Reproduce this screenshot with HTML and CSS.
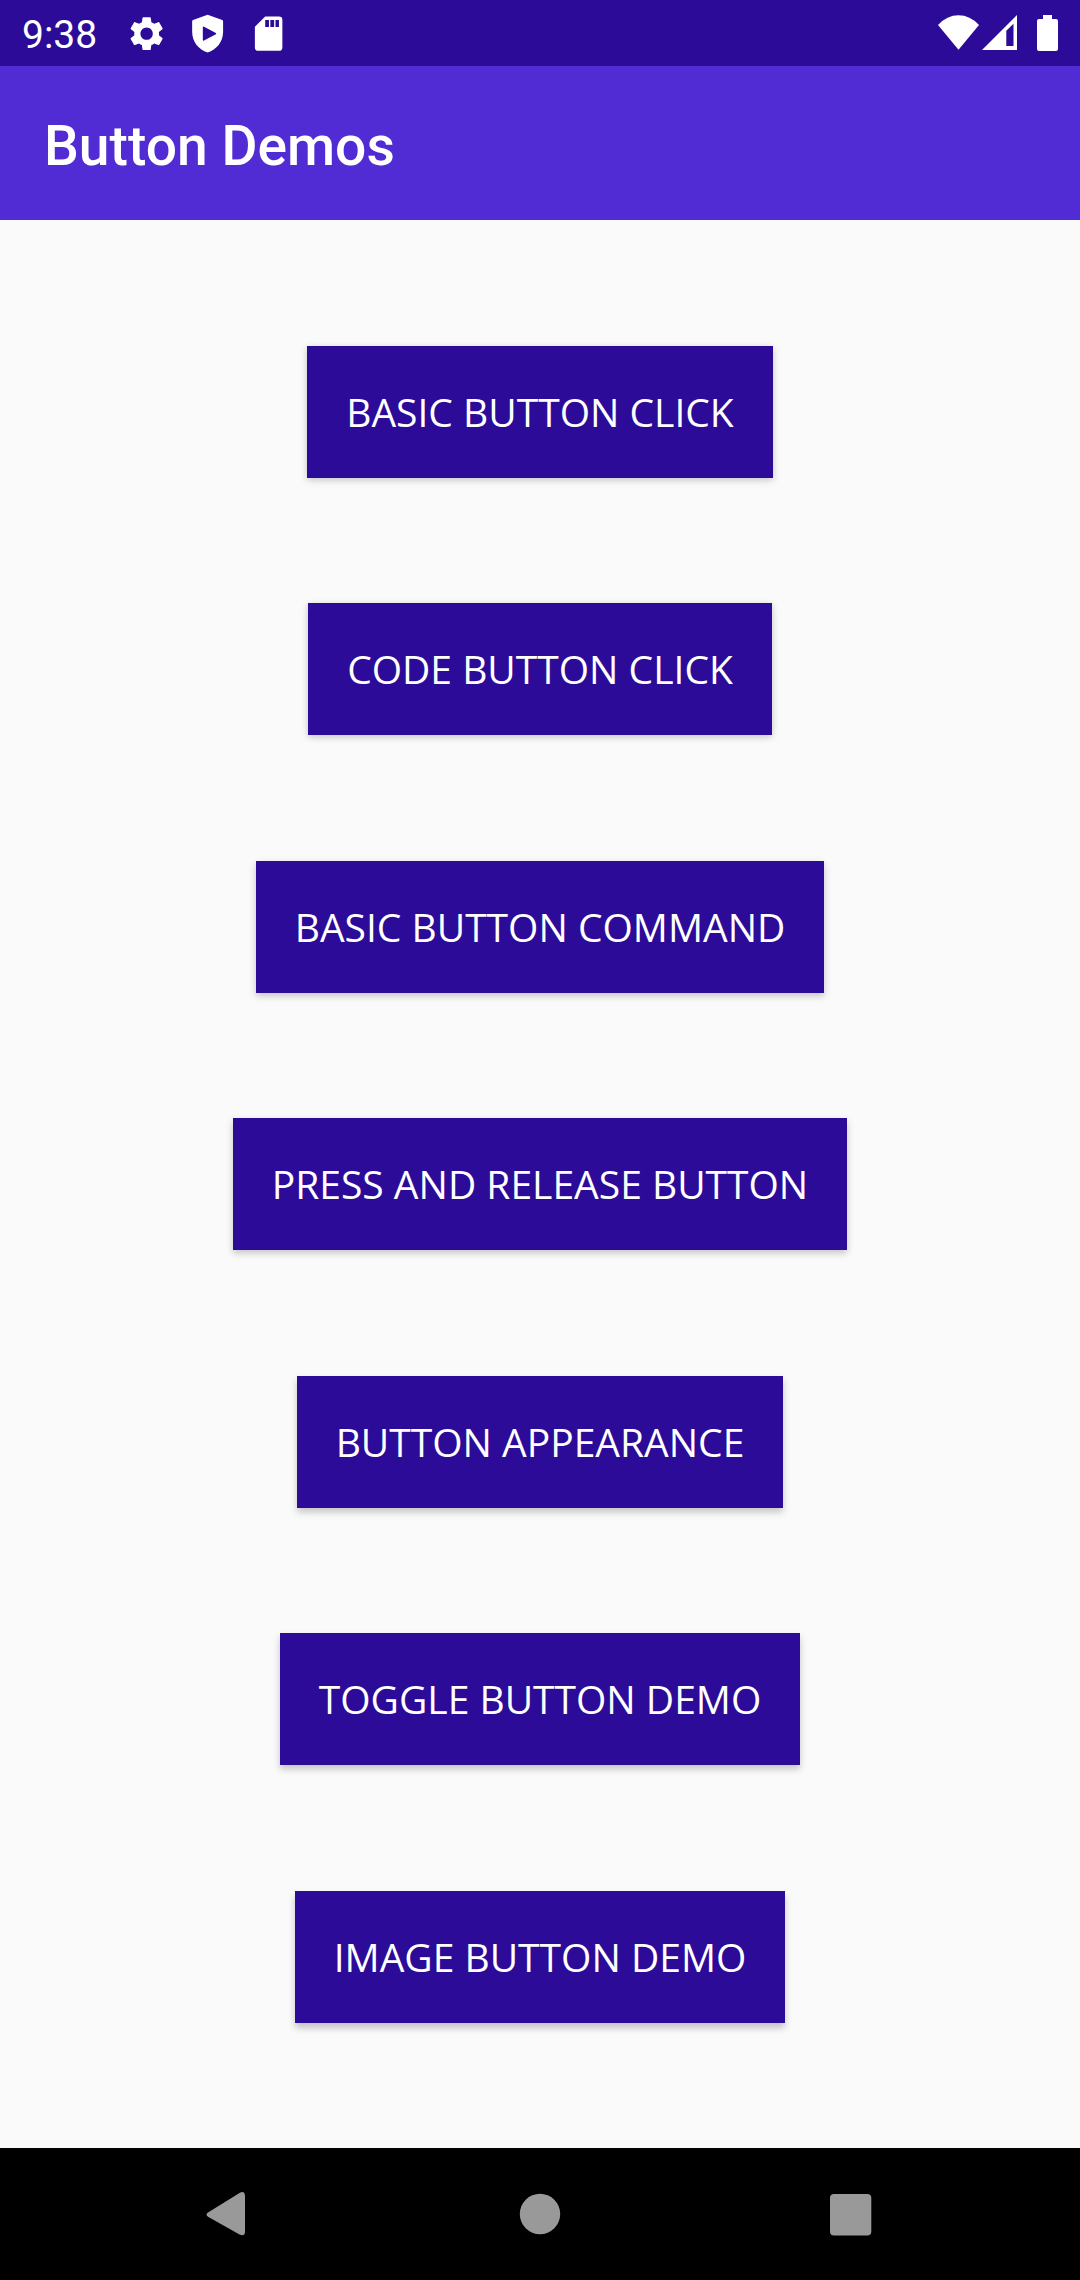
FILE: index.html
```html
<!DOCTYPE html>
<html lang="en">
<head>
<meta charset="utf-8">
<title>Button Demos</title>
<link rel="stylesheet" href="styles.css">
</head>
<body>
<div class="screen">
  <div class="status-bar">
    <span class="clock">9:38</span>
    <div class="notifications">
      <svg class="status-icon" viewBox="0 0 24 24"><path d="M19.14 12.94c.04-.3.06-.61.06-.94 0-.32-.02-.64-.07-.94l2.03-1.58c.18-.14.23-.41.12-.61l-1.92-3.32c-.12-.22-.37-.29-.59-.22l-2.39.96c-.5-.38-1.03-.7-1.62-.94L14.4 2.81c-.04-.24-.24-.41-.48-.41h-3.84c-.24 0-.43.17-.47.41L9.25 5.35c-.59.24-1.13.57-1.62.94l-2.39-.96c-.22-.08-.47 0-.59.22L2.74 8.87c-.12.21-.08.47.12.61l2.03 1.58c-.05.3-.09.63-.09.94s.02.64.07.94l-2.03 1.58c-.18.14-.23.41-.12.61l1.92 3.32c.12.22.37.29.59.22l2.39-.96c.5.38 1.03.7 1.62.94l.36 2.54c.05.24.24.41.48.41h3.84c.24 0 .44-.17.47-.41l.36-2.54c.59-.24 1.13-.56 1.62-.94l2.39.96c.22.08.47 0 .59-.22l1.92-3.32c.12-.22.07-.47-.12-.61l-2.01-1.58zM12 15.6c-1.98 0-3.6-1.62-3.6-3.6s1.62-3.6 3.6-3.6 3.6 1.62 3.6 3.6-1.62 3.6-3.6 3.6z"/></svg>
      <svg class="status-icon" viewBox="0 0 24 24"><path fill-rule="evenodd" d="M12 1 20.5 4.1Q21 4.3 21 4.9V11C21 16.8 17.2 21.2 12 23 6.800 21.200 3 16.800 3 11V4.900Q3 4.300 3.500 4.100ZM9.200 8.300V15.700Q9.300 16.300 9.900 16L16.800 12.400Q17.300 12 16.800 11.600L9.900 8Q9.300 7.700 9.200 8.300Z"/></svg>
      <svg class="status-icon" viewBox="0 0 24 24"><path fill-rule="evenodd" d="M18 2H10L4 8V20A2 2 0 0 0 6 22H18A2 2 0 0 0 20 20V4A2 2 0 0 0 18 2ZM10 4H12.200V8.200H10ZM13 4H15.200V8.200H13ZM16 4H18V8.200H16Z"/></svg>
    </div>
    <svg class="system-icons" viewBox="0 0 122 40">
      <path d="M0 12Q9 2.300 20.500 2.300T41 12L20.500 36.700Z"/>
      <path fill-rule="evenodd" d="M44 37 79 2V37ZM68.300 17.700V33H75.500V10.700Z"/>
      <path d="M105 2H114V6H118Q120 6 120 8V36Q120 38 118 38H101Q99 38 99 36V8Q99 6 101 6H105Z"/>
    </svg>
  </div>
  <header class="app-bar"><h1 class="app-title">Button Demos</h1></header>
  <main class="button-list">
    <button class="demo-button">BASIC BUTTON CLICK</button>
    <button class="demo-button">CODE BUTTON CLICK</button>
    <button class="demo-button">BASIC BUTTON COMMAND</button>
    <button class="demo-button">PRESS AND RELEASE BUTTON</button>
    <button class="demo-button">BUTTON APPEARANCE</button>
    <button class="demo-button">TOGGLE BUTTON DEMO</button>
    <button class="demo-button">IMAGE BUTTON DEMO</button>
  </main>
  <nav class="nav-bar">
    <svg class="nav-icon" viewBox="0 0 60 60"><path d="M8 24.500 39.500 4.900Q44.500 2.500 45 7.500V44Q44.500 49 39.500 46.500L8 28.800Q5 26.700 8 24.500Z"/></svg>
    <svg class="nav-icon" viewBox="0 0 60 60"><circle cx="30" cy="26" r="20.200"/></svg>
    <svg class="nav-icon" viewBox="0 0 60 60"><rect x="10" y="6" width="41.300" height="41.500" rx="4"/></svg>
  </nav>
</div>
</body>
</html>
```
FILE: styles.css
```css
* {
  box-sizing: border-box;
}

body {
  margin: 0;
}

.screen {
  width: 1080px;
  height: 2280px;
  display: flex;
  flex-direction: column;
  background: #fafafa;
  font-family: Roboto, sans-serif;
  color: #fff;
}

.status-bar {
  height: 66px;
  flex: none;
  display: flex;
  align-items: center;
  padding: 0 20px 0 22px;
  background: #2b0b98;
}

.clock {
  width: 103.5px;
  font-size: 39px;
  line-height: 45px;
  padding-top: 4px;
}

.notifications {
  display: flex;
  gap: 19.75px;
  padding-top: 1px;
}

.status-icon {
  width: 41.25px;
  height: 41.25px;
  fill: #fff;
}

.system-icons {
  width: 122px;
  height: 40px;
  margin-left: auto;
  fill: #fff;
}

.app-bar {
  height: 154px;
  flex: none;
  display: flex;
  align-items: center;
  padding: 5px 44px 0;
  background: #512bd4;
}

.app-title {
  margin: 0;
  font-size: 55.2px;
  font-weight: 500;
  line-height: 64px;
}

.button-list {
  flex: 1;
  display: flex;
  flex-direction: column;
  align-items: center;
  justify-content: space-evenly;
}

.demo-button {
  --drop: 2px;
  height: 132px;
  padding: 0 38.75px 0.5px;
  border: 0;
  background: #2b0b98;
  color: #fff;
  font: 400 39px "Open Sans", sans-serif;
  white-space: nowrap;
  box-shadow: 0 var(--drop) 7px rgba(0, 0, 0, 0.22);
}

.demo-button:nth-child(n + 3) {
  --drop: 3px;
}

.demo-button:nth-child(n + 5) {
  --drop: 4px;
}

.demo-button:nth-child(n + 7) {
  --drop: 5px;
}

.nav-bar {
  height: 132px;
  flex: none;
  display: flex;
  gap: 250px;
  padding: 40px 200px 0;
  background: #000;
}

.nav-icon {
  width: 60px;
  height: 60px;
  flex: none;
  fill: #999;
}
```
